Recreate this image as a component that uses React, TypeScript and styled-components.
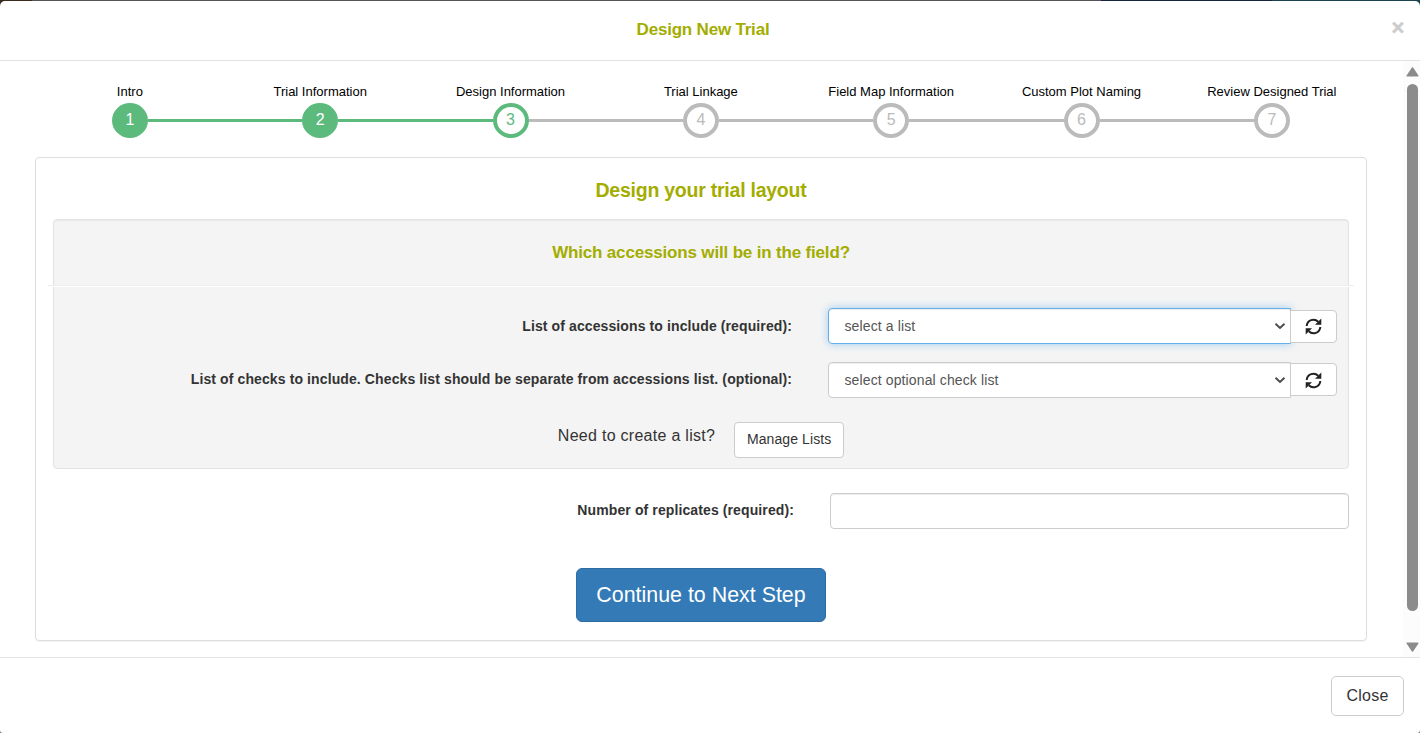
import React from "react";
import styled, { createGlobalStyle } from "styled-components";

const Global = createGlobalStyle`
  * { box-sizing: border-box; }
  body {
    margin: 0;
    background: #565356;
    color: #333;
    font: 14px/20px "Liberation Sans", Arial, sans-serif;
    overflow: hidden;
  }
  button, select, input { font-family: inherit; margin: 0; }
`;

const Page = styled.div`
  height: 733px;
  padding-top: 1px;
  background: linear-gradient(90deg, #3a2a1c 0 32px, #565356 32px 1101px, #14233f 1101px 1272px, #1c4450 1272px) top / 100% 8px no-repeat, #777;
`;

const Modal = styled.div`
  display: flex;
  flex-direction: column;
  height: 732px;
  border-radius: 5px 5px 3px 3px;
  background: #fff;
  overflow: hidden;
`;

const Header = styled.header`
  display: grid;
  grid-template-columns: 1fr 14px;
  height: 60px;
  padding: 17px 15px 0;
  border-bottom: 1px solid #e2e2e2;
`;

const Title = styled.h4<{ $size: number; $spacing?: number }>`
  margin: 0;
  color: #a3ad00;
  font-size: ${(p) => p.$size}px;
  line-height: 22px;
  letter-spacing: ${(p) => p.$spacing ?? 0}px;
  text-align: center;
  white-space: nowrap;
`;

const ModalTitle = styled(Title)`
  line-height: 24px;
`;

const WellTitle = styled(Title)`
  line-height: 24px;
  margin-bottom: -2px;
`;

const Dismiss = styled.button`
  justify-self: end;
  width: 14px;
  height: 20px;
  padding: 0;
  border: 0;
  background: none;
  color: #ccc;
  font-size: 22px;
  font-weight: 700;
  line-height: 20px;
  -webkit-text-stroke: 0.5px #ccc;
`;

const Body = styled.div`
  display: flex;
  flex: 1;
`;

const Content = styled.main`
  flex: 1;
  padding: 20px 36px 0 35px;
`;

const Steps = styled.ol`
  display: grid;
  grid-template-columns: repeat(7, 190.33px);
  margin: 0 0 19px -0.3px;
  padding: 0;
  list-style: none;
`;

type Status = "done" | "current" | "todo";
const tone = (s: Status) => (s === "todo" ? "#bbb" : "#5dba7d");

const Step = styled.li`
  display: flex;
  flex-direction: column;
  align-items: center;
`;

const StepLabel = styled.span`
  height: 22px;
  color: #000;
  font-size: 13px;
  line-height: 21px;
  white-space: nowrap;
`;

const Track = styled.div`
  display: flex;
  align-items: center;
  align-self: stretch;
`;

const Rail = styled.span<{ $color: string }>`
  flex: 1;
  height: 3px;
  background: ${(p) => p.$color};
`;

const Dot = styled.span<{ $status: Status }>`
  width: 36px;
  height: 35px;
  border: 4px solid ${(p) => tone(p.$status)};
  border-radius: 50%;
  background: ${(p) => (p.$status === "done" ? "#5dba7d" : "#fff")};
  color: ${(p) => (p.$status === "done" ? "#fff" : tone(p.$status))};
  font-size: 16px;
  line-height: 25px;
  text-align: center;
`;

const Panel = styled.section`
  display: flex;
  flex-direction: column;
  align-items: center;
  width: 1332px;
  height: 484px;
  padding: 21px 17px 0;
  border: 1px solid #ddd;
  border-radius: 4px;
  box-shadow: 0 1px 1px rgba(0, 0, 0, 0.05);
`;

const Well = styled.section`
  align-self: stretch;
  height: 250px;
  margin-top: 18px;
  padding-top: 21px;
  border: 1px solid #e3e3e3;
  border-radius: 4px;
  background: #f4f4f4;
  box-shadow: inset 0 1px 1px rgba(0, 0, 0, 0.05);
`;

const Divider = styled.hr`
  height: 2px;
  margin: 22px -6px 21px;
  border: 0;
  border-top: 1px solid #eee;
  background: #fff;
`;

const Row = styled.div<{ $bottom?: number }>`
  display: grid;
  grid-template-columns: 738px auto;
  column-gap: 36px;
  height: 36px;
  margin-bottom: ${(p) => p.$bottom ?? 0}px;
`;

const Label = styled.label<{ $top?: number }>`
  padding-top: ${(p) => p.$top ?? 8}px;
  font-weight: 700;
  letter-spacing: 0.11px;
  text-align: right;
  white-space: nowrap;
`;

const Group = styled.div`
  display: flex;
  align-items: flex-start;
`;

const Choice = styled.div<{ $focus?: boolean }>`
  display: flex;
  align-items: center;
  justify-content: space-between;
  width: 463px;
  height: 36px;
  padding: 0 4px 0 15.5px;
  border: 1px solid ${(p) => (p.$focus ? "#66afe9" : "#ccc")};
  border-radius: 4px 0 0 4px;
  background: #fff;
  box-shadow: inset 0 1px 1px rgba(0, 0, 0, 0.075)${(p) => (p.$focus ? ", 0 0 8px rgba(102, 175, 233, 0.6)" : "")};
  color: #555;
  letter-spacing: 0.12px;
`;

const Refresh = styled.button<{ $top: number; $nudge?: number }>`
  display: grid;
  place-items: center;
  width: 47px;
  height: 33px;
  margin: ${(p) => p.$top}px 0 0 -1px;
  padding: ${(p) => p.$nudge ?? 0}px 0 0;
  border: 1px solid #ccc;
  border-radius: 0 4px 4px 0;
  background: #fff;
  color: #222;
`;

const Hint = styled.div`
  display: flex;
  justify-content: center;
  gap: 19px;
  font-size: 16px;
  line-height: 28px;
  letter-spacing: 0.28px;
`;

const Button = styled.button<{ $w: number; $h: number; $size: number }>`
  width: ${(p) => p.$w}px;
  height: ${(p) => p.$h}px;
  padding: 0 0 2px;
  border: 1px solid #ccc;
  border-radius: 4px;
  background: #fff;
  color: #333;
  font-size: ${(p) => p.$size}px;
  letter-spacing: 0.1px;
`;

const Primary = styled(Button)`
  margin-top: 39px;
  padding: 1px 0 0;
  border-color: #2e6da4;
  border-radius: 6px;
  background: #337ab7;
  color: #fff;
  letter-spacing: 0;
`;

const Field = styled.input`
  width: 519px;
  height: 36px;
  border: 1px solid #ccc;
  border-radius: 4px;
  background: #fff;
  box-shadow: inset 0 1px 1px rgba(0, 0, 0, 0.075);
`;

const Replicates = styled(Row)`
  grid-template-columns: 741px auto;
  align-self: stretch;
  margin-top: 24px;
`;

const Scrollbar = styled.div`
  display: flex;
  flex-direction: column;
  align-items: center;
  width: 17px;
  padding: 6px 0 5px 2px;
  background: #fcfcfc;
`;

const Thumb = styled.div`
  width: 11px;
  height: 527px;
  margin: 7px 0 auto;
  border-radius: 6px;
  background: #8b8b8b;
`;

const Footer = styled.footer`
  display: flex;
  justify-content: flex-end;
  height: 76px;
  padding: 18px 16px 0;
  border-top: 1px solid #e2e2e2;
`;

const CloseButton = styled(Button)`
  padding: 0;
  border-radius: 5px;
  letter-spacing: 0.25px;
`;

const steps: [string, Status][] = [
  ["Intro", "done"],
  ["Trial Information", "done"],
  ["Design Information", "current"],
  ["Trial Linkage", "todo"],
  ["Field Map Information", "todo"],
  ["Custom Plot Naming", "todo"],
  ["Review Designed Trial", "todo"],
];

const Chevron = () => (
  <svg width="12" height="8" viewBox="0 0 12 8" fill="none" stroke="#4a4a4a" strokeWidth="1.900">
    <path d="M1.500 1.700 6 5.900l4.500-4.200" />
  </svg>
);

const RefreshIcon = () => (
  <svg width="17" height="17" viewBox="0 0 17 17" fill="none" stroke="currentColor" strokeWidth="2">
    <path d="M1.700 8A6.700 6.700 0 0 1 13.200 3.800M15.300 9A6.700 6.700 0 0 1 3.800 13.200" />
    <path d="M16.300 .5V6.800H10zM.7 16.500V10.200H7z" fill="currentColor" stroke="none" />
  </svg>
);

const Arrow = ({ down }: { down?: boolean }) => (
  <svg width="13" height="10" viewBox="0 0 13 10" fill="#8b8b8b" stroke="#8b8b8b" strokeWidth="1.500" strokeLinejoin="round">
    <path d={down ? "M1.200 1.200h10.600L6.500 9z" : "M1.200 8.800h10.600L6.500 1z"} />
  </svg>
);

export default function App() {
  return (
    <Page>
      <Global />
      <Modal>
        <Header>
          <ModalTitle $size={17} $spacing={-0.2}>Design New Trial</ModalTitle>
          <Dismiss>×</Dismiss>
        </Header>
        <Body>
          <Content>
            <Steps>
              {steps.map(([name, status], i) => (
                <Step key={name}>
                  <StepLabel>{name}</StepLabel>
                  <Track>
                    <Rail $color={i === 0 ? "transparent" : tone(status)} />
                    <Dot $status={status}>{i + 1}</Dot>
                    <Rail $color={i === 6 ? "transparent" : tone(steps[i + 1][1])} />
                  </Track>
                </Step>
              ))}
            </Steps>
            <Panel>
              <Title $size={19.5} $spacing={-0.24}>Design your trial layout</Title>
              <Well>
                <WellTitle $size={17} $spacing={-0.17}>Which accessions will be in the field?</WellTitle>
                <Divider />
                <Row $bottom={18}>
                  <Label>List of accessions to include (required):</Label>
                  <Group>
                    <Choice $focus>
                      select a list
                      <Chevron />
                    </Choice>
                    <Refresh $top={2}>
                      <RefreshIcon />
                    </Refresh>
                  </Group>
                </Row>
                <Row $bottom={24}>
                  <Label $top={7}>List of checks to include. Checks list should be separate from accessions list. (optional):</Label>
                  <Group>
                    <Choice>
                      select optional check list
                      <Chevron />
                    </Choice>
                    <Refresh $top={1} $nudge={2}>
                      <RefreshIcon />
                    </Refresh>
                  </Group>
                </Row>
                <Hint>
                  Need to create a list?
                  <Button $w={110} $h={36} $size={14}>Manage Lists</Button>
                </Hint>
              </Well>
              <Replicates>
                <Label $top={7}>Number of replicates (required):</Label>
                <Field />
              </Replicates>
              <Primary $w={250} $h={54} $size={21.4}>Continue to Next Step</Primary>
            </Panel>
          </Content>
          <Scrollbar>
            <Arrow />
            <Thumb />
            <Arrow down />
          </Scrollbar>
        </Body>
        <Footer>
          <CloseButton $w={73} $h={40} $size={16}>Close</CloseButton>
        </Footer>
      </Modal>
    </Page>
  );
}
